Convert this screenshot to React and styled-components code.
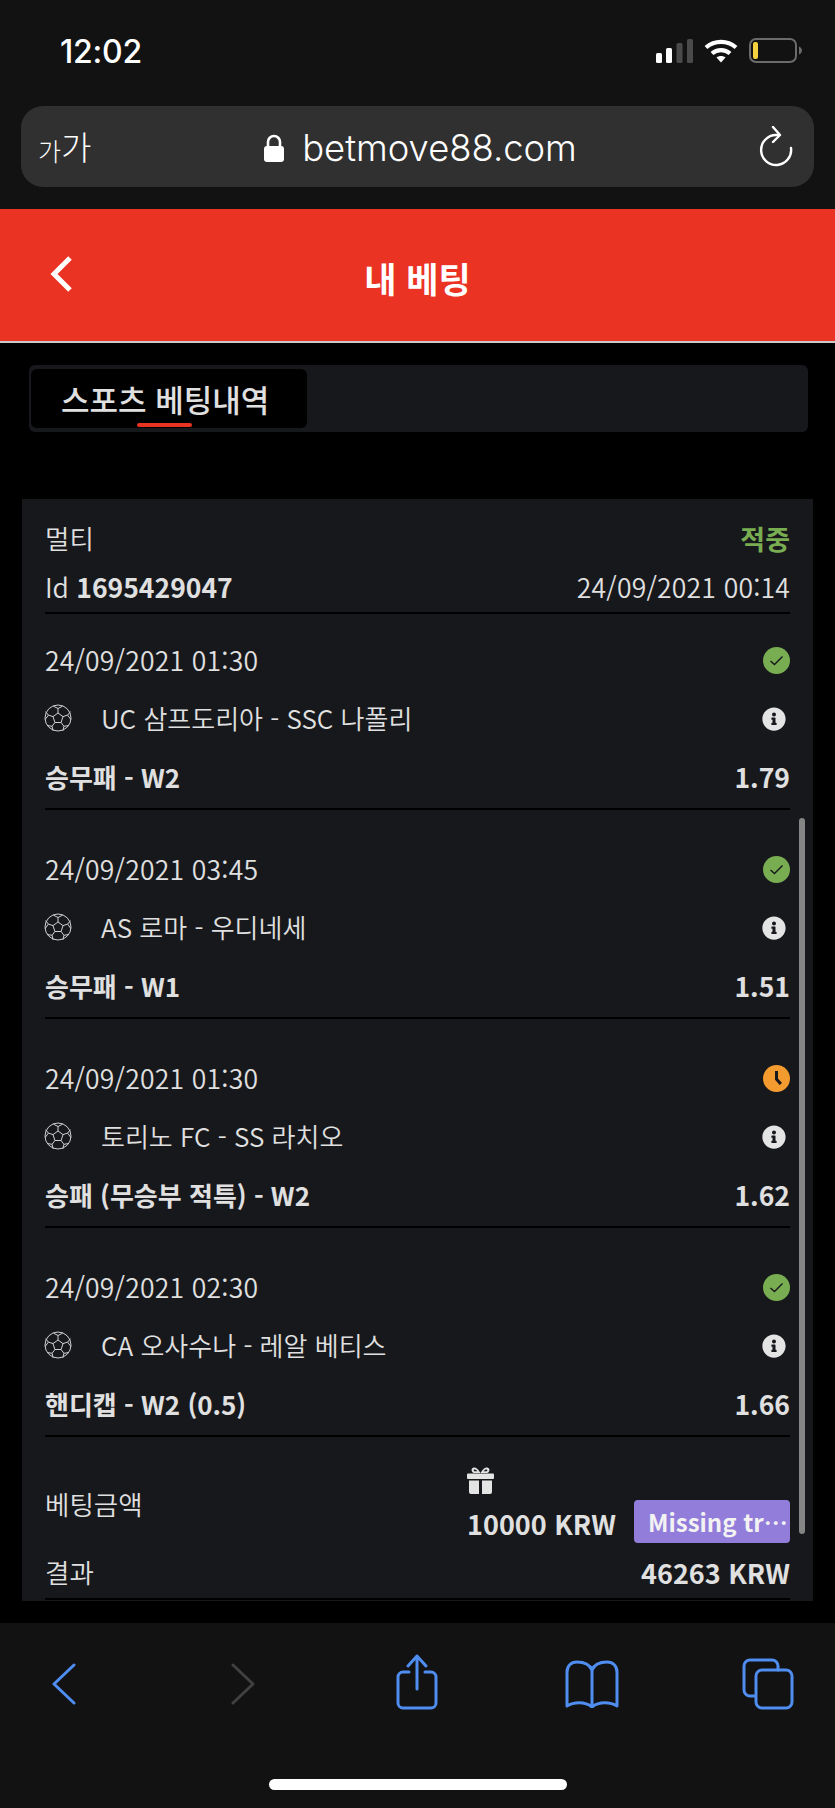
import React from 'react'
import styled, {createGlobalStyle} from 'styled-components'
import {FaInfoCircle} from 'react-icons/fa'

const GlobalStyle = createGlobalStyle`
  html, body {
    margin: 0;
    padding: 0;
    background: #000;
  }
  * {
    box-sizing: border-box;
  }
`

const Page = styled.div`
  width: 835px;
  height: 1808px;
  display: flex;
  flex-direction: column;
  overflow: hidden;
  font-family: "Noto Sans CJK KR", "Noto Sans", sans-serif;
  color: #e0e0e0;
`

const TopChrome = styled.div`
  height: 209px;
  flex: none;
  background: #121212;
  padding: 0 21px 0 21px;
`

const StatusBar = styled.div`
  height: 106px;
  display: flex;
  justify-content: space-between;
  padding: 36px 11px 0 39px;
  align-items: flex-start;
`

const Time = styled.div`
  font-family: Inter, "Liberation Sans", sans-serif;
  font-size: 32px;
  font-weight: 500;
  line-height: 32px;
  letter-spacing: -0.2px;
  color: #fff;
`

const StatusIcons = styled.div`
  display: flex;
  align-items: center;
  gap: 11px;
  margin-top: 2px;
`

const AddressBar = styled.div`
  height: 81px;
  border-radius: 22px;
  background: #303030;
  display: grid;
  grid-template-columns: 1fr auto 1fr;
  align-items: center;
  padding: 0 21px 0 17px;
  color: #fff;
`

const TextSize = styled.div`
  display: flex;
  align-items: flex-end;
  font-weight: 300;
  line-height: 1;
`

const TextSizeGlyph = styled.span`
  font-size: ${props => props.size}px;
`

const Url = styled.div`
  display: flex;
  align-items: center;
  gap: 18px;
  font-family: Inter, "Liberation Sans", sans-serif;
  font-size: 36.400px;
  font-weight: 300;
  margin-left: 10px;
  padding-top: 2px;
`

const Reload = styled.div`
  display: flex;
  justify-content: flex-end;
`

const Header = styled.header`
  height: 134px;
  flex: none;
  background: #ea3323;
  border-bottom: 2px solid #c9c9c9;
  display: grid;
  grid-template-columns: 1fr auto 1fr;
  align-items: center;
  padding-top: 4px;
  color: #fff;
`

const BackButton = styled.div`
  display: flex;
  margin: -7px 0 0 50px;
`

const HeaderTitle = styled.h1`
  margin: 0;
  font-size: 35px;
  font-weight: 700;
  line-height: 1;
`

const Main = styled.main`
  flex: 1;
  background: #000;
  padding: 22px 22px 0;
`

const TabStrip = styled.div`
  height: 67px;
  margin: 0 5px 0 7px;
  background: #17181c;
  border-radius: 6px;
  padding: 4px 2px 4px;
  display: flex;
`

const Tab = styled.div`
  position: relative;
  width: 276px;
  background: #000;
  border-radius: 6px;
  display: flex;
  align-items: center;
  padding-left: 30px;
  padding-bottom: 1px;
  font-size: 31px;
  font-weight: 500;
  line-height: 1;
  color: #e0e0e0;
  &::after {
    content: "";
    position: absolute;
    left: 106px;
    bottom: 1px;
    width: 55px;
    height: 4px;
    border-radius: 2px;
    background: #ea3323;
  }
`

const Card = styled.section`
  position: relative;
  height: 1102px;
  margin-top: 67px;
  padding: 15px 23px 0;
  background: #17181c;
  overflow: hidden;
`

const ScrollThumb = styled.div`
  position: absolute;
  top: 319px;
  right: 8px;
  width: 6px;
  height: 716px;
  border-radius: 3px;
  background: #858585;
`

const Row = styled.div`
  display: flex;
  justify-content: space-between;
  align-items: center;
  height: ${props => props.height}px;
  padding-bottom: ${props => props.lift || 0}px;
  font-size: 26.500px;
  font-weight: ${props => (props.strong ? 700 : 350)};
  line-height: 1;
  white-space: nowrap;
`

const SlipHead = styled.div`
  border-bottom: 2px solid #000;
`

const Status = styled.span`
  color: #79ad52;
  font-size: 27px;
  font-weight: 700;
`

const SlipId = styled.b`
  font-weight: 700;
`

const DateText = styled.span`
  letter-spacing: 0.2px;
`

const Leg = styled.div`
  padding-top: 23px;
  border-bottom: 2px solid #000;
  & + & {
    margin-top: 13px;
  }
`

const MatchName = styled.div`
  display: flex;
  align-items: center;
  gap: 29px;
  font-size: 26px;
`

const MarketName = styled.span`
  font-size: 26px;
`

const BallIcon = styled.svg`
  width: 28px;
  height: 28px;
  margin-left: -1px;
  flex: none;
`

const InfoIcon = styled(FaInfoCircle)`
  font-size: 24px;
  color: #e4e4e4;
  margin: 2px 4px 0 0;
`

const StakeRow = styled.div`
  display: flex;
  justify-content: space-between;
  align-items: center;
  height: 100px;
  margin-top: 16px;
  font-size: 26.500px;
  font-weight: 350;
`

const StakeValues = styled.div`
  display: flex;
  align-self: flex-end;
  align-items: flex-end;
  gap: 18px;
  padding-bottom: 10px;
`

const StakeAmount = styled.div`
  display: flex;
  flex-direction: column;
  gap: 16px;
  font-size: 27px;
  font-weight: 700;
  line-height: 1;
  padding-bottom: 6px;
`

const Badge = styled.div`
  width: 156px;
  height: 43px;
  padding-left: 14px;
  border-radius: 4px;
  background: #937ddb;
  color: #f2f2f2;
  font-size: 24px;
  font-weight: 700;
  line-height: 43px;
  white-space: nowrap;
`

const ResultRow = styled(Row)`
  border-bottom: 2px solid #000;
`

const ResultAmount = styled.span`
  font-size: 27px;
  font-weight: 700;
`

const BottomChrome = styled.div`
  height: 185px;
  flex: none;
  background: #121212;
  display: flex;
  flex-direction: column;
`

const Toolbar = styled.div`
  height: 156px;
  display: flex;
  align-items: flex-start;
  justify-content: space-between;
  padding: 31px 35px 0 33px;
`

const ToolSlot = styled.div`
  width: 64px;
  display: flex;
  justify-content: center;
`

const ToolIcon = styled.svg`
  flex: none;
  fill: none;
  stroke: ${props => (props.disabled ? '#404040' : '#4f8ef0')};
  stroke-width: 3;
  stroke-linecap: round;
  stroke-linejoin: round;
  margin-top: ${props => props.top || 0}px;
  margin-left: ${props => props.nudge || 0}px;
`

const HomeIndicator = styled.div`
  align-self: center;
  width: 298px;
  height: 11px;
  border-radius: 6px;
  background: #fff;
`

const legs = [
  {date: '24/09/2021 01:30', match: 'UC 삼프도리아 - SSC 나폴리', market: '승무패 - W2', odds: '1.79', state: 'won'},
  {date: '24/09/2021 03:45', match: 'AS 로마 - 우디네세', market: '승무패 - W1', odds: '1.51', state: 'won'},
  {date: '24/09/2021 01:30', match: '토리노 FC - SS 라치오', market: '승패 (무승부 적특) - W2', odds: '1.62', state: 'pending'},
  {date: '24/09/2021 02:30', match: 'CA 오사수나 - 레알 베티스', market: '핸디캡 - W2 (0.5)', odds: '1.66', state: 'won'},
]

function SignalIcon() {
  return (
    <svg width="37" height="24" viewBox="0 0 37 24">
      <rect x="0" y="14" width="6" height="10" rx="1.5" fill="#fff" />
      <rect x="10" y="9" width="6" height="15" rx="1.5" fill="#fff" />
      <rect x="20.500" y="4" width="6" height="20" rx="1.5" fill="#4a4a4a" />
      <rect x="31" y="0" width="6" height="24" rx="1.5" fill="#4a4a4a" />
    </svg>
  )
}

function WifiIcon() {
  return (
    <svg width="34" height="24" viewBox="0 0 34 24" fill="none" stroke="#fff" strokeWidth="4.200">
      <path d="M2 8.500C10.500 1 23.500 1 32 8.500" />
      <path d="M8 14.500C13 10 21 10 26 14.500" />
      <path d="M17 23.500L12.500 18.500C15 16.500 19 16.500 21.500 18.500Z" fill="#fff" stroke="none" />
    </svg>
  )
}

function BatteryIcon() {
  return (
    <svg width="54" height="25" viewBox="0 0 54 25">
      <rect x="1" y="1" width="46" height="23" rx="6" fill="none" stroke="#6b6b6b" strokeWidth="2" />
      <rect x="4" y="4" width="5" height="17" rx="2" fill="#f5d23d" />
      <path d="M50 8.500C52 9.500 53 11 53 12.500C53 14 52 15.500 50 16.500Z" fill="#6b6b6b" />
    </svg>
  )
}

function LockIcon() {
  return (
    <svg width="20" height="28" viewBox="0 0 20 28">
      <path d="M4 13V8a6 6 0 0 1 12 0v5" fill="none" stroke="#fff" strokeWidth="2.600" />
      <rect x="0" y="12" width="20" height="16" rx="3" fill="#fff" />
    </svg>
  )
}

function ReloadIcon() {
  return (
    <svg width="34" height="42" viewBox="0 0 34 42" fill="none" stroke="#fff" strokeWidth="2.400" strokeLinecap="round" strokeLinejoin="round">
      <path d="M32 22A15 15 0 1 1 17 9h3" />
      <path d="M14 1l7 8-7 7" />
    </svg>
  )
}

function GiftIcon() {
  return (
    <svg width="27" height="27" viewBox="0 0 27 27" fill="#e4e4e4">
      <path d="M13.500 6C11 1.500 8.500 0 6.500 0.500 4.500 1 4 3 5 4.500 5.500 5.500 6.500 6 8 6zM8 4.300C7 4.300 6.500 3.600 6.800 2.900 7.300 2 9 2.500 10.500 4.300z" fillRule="evenodd" />
      <path d="M13.500 6C16 1.500 18.500 0 20.500 0.500 22.500 1 23 3 22 4.500 21.500 5.500 20.500 6 19 6zM19 4.300C20 4.300 20.500 3.600 20.200 2.900 19.700 2 18 2.500 16.500 4.300z" fillRule="evenodd" />
      <rect x="0" y="6.500" width="27" height="5.500" rx="1" />
      <path d="M2 13.500h10V27H4a2 2 0 0 1-2-2zM15 13.500h10V25a2 2 0 0 1-2 2h-8z" />
    </svg>
  )
}

function Ball() {
  return (
    <BallIcon viewBox="0 0 28 28" fill="none" stroke="#d0d0d0" strokeWidth="1">
      <circle cx="14" cy="14" r="13" />
      <path d="M14 9l5 3.600-1.900 5.900h-6.200L9 12.600z" />
      <path d="M14 9V4.500M19 12.600l4.600-1.500M17.100 18.500l2.800 3.800M10.900 18.500l-2.800 3.800M9 12.600l-4.600-1.500" />
      <path d="M9.500 2.200L14 4.500l4.500-2.300M23.600 11.100l2.800-3.500M23.600 11.100l3.300 4.500M19.900 22.300l5-.8M19.900 22.300l-1 4.400M8.100 22.300l1 4.400M8.100 22.300l-5-.8M4.400 11.100l-3.300 4.500M4.400 11.100L1.600 7.600" />
    </BallIcon>
  )
}

function StateIcon({state}) {
  if (state === 'pending') {
    return (
      <svg width="27" height="27" viewBox="0 0 27 27">
        <circle cx="13.500" cy="13.500" r="13.500" fill="#f49b2f" />
        <path d="M12 6h3v7.500l4 4.500-2.300 2-4.700-5.200z" fill="#17181c" />
      </svg>
    )
  }
  return (
    <svg width="27" height="27" viewBox="0 0 27 27">
      <circle cx="13.500" cy="13.500" r="13.500" fill="#79ad52" />
      <path d="M7.500 14l4 3.500 8-8" fill="none" stroke="#17181c" strokeWidth="1.400" />
    </svg>
  )
}

function BetLeg({date, match, market, odds, state}) {
  return (
    <Leg>
      <Row height={50} lift={3}>
        <DateText>{date}</DateText>
        <StateIcon state={state} />
      </Row>
      <Row height={62}>
        <MatchName>
          <Ball />
          <span>{match}</span>
        </MatchName>
        <InfoIcon />
      </Row>
      <Row height={59} lift={3} strong>
        <MarketName>{market}</MarketName>
        <span>{odds}</span>
      </Row>
    </Leg>
  )
}

export default function App() {
  return (
    <Page lang="ko">
      <GlobalStyle />
      <TopChrome>
        <StatusBar>
          <Time>12:02</Time>
          <StatusIcons>
            <SignalIcon />
            <WifiIcon />
            <BatteryIcon />
          </StatusIcons>
        </StatusBar>
        <AddressBar>
          <TextSize>
            <TextSizeGlyph size={25}>가</TextSizeGlyph>
            <TextSizeGlyph size={33}>가</TextSizeGlyph>
          </TextSize>
          <Url>
            <LockIcon />
            betmove88.com
          </Url>
          <Reload>
            <ReloadIcon />
          </Reload>
        </AddressBar>
      </TopChrome>

      <Header>
        <BackButton>
          <svg width="22" height="36" viewBox="0 0 22 36" fill="none" stroke="#fff" strokeWidth="5">
            <path d="M20 2L4 18l16 16" />
          </svg>
        </BackButton>
        <HeaderTitle>내 베팅</HeaderTitle>
      </Header>

      <Main>
        <TabStrip>
          <Tab>스포츠 베팅내역</Tab>
        </TabStrip>
        <Card>
          <ScrollThumb />
          <SlipHead>
            <Row height={49}>
              <span>멀티</span>
              <Status>적중</Status>
            </Row>
            <Row height={49}>
              <span>Id <SlipId>1695429047</SlipId></span>
              <DateText>24/09/2021 00:14</DateText>
            </Row>
          </SlipHead>
          {legs.map((leg, i) => (
            <BetLeg key={i} {...leg} />
          ))}
          <StakeRow>
            <span>베팅금액</span>
            <StakeValues>
              <StakeAmount>
                <GiftIcon />
                <span>10000 KRW</span>
              </StakeAmount>
              <Badge>Missing tr…</Badge>
            </StakeValues>
          </StakeRow>
          <ResultRow height={47} lift={6}>
            <span>결과</span>
            <ResultAmount>46263 KRW</ResultAmount>
          </ResultRow>
        </Card>
      </Main>

      <BottomChrome>
        <Toolbar>
          <ToolSlot>
            <ToolIcon width="24" height="44" viewBox="0 0 24 44" top={8} nudge={-2}>
              <path d="M22 3L2 22l20 19" />
            </ToolIcon>
          </ToolSlot>
          <ToolSlot>
            <ToolIcon width="24" height="44" viewBox="0 0 24 44" top={8} nudge={4} disabled>
              <path d="M2 3l20 19L2 41" />
            </ToolIcon>
          </ToolSlot>
          <ToolSlot>
            <ToolIcon width="42" height="56" viewBox="0 0 42 56">
              <path d="M13 18H7a5 5 0 0 0-5 5v26a5 5 0 0 0 5 5h28a5 5 0 0 0 5-5V23a5 5 0 0 0-5-5h-6" />
              <path d="M21 35V2M12 12l9-10 9 10" />
            </ToolIcon>
          </ToolSlot>
          <ToolSlot>
            <ToolIcon width="54" height="48" viewBox="0 0 54 48" top={6}>
              <path d="M27 10C24 3 18 2 12 2 6 2 2 6 2 12v34c6-4 18-5 25 1 7-6 19-5 25-1V12c0-6-4-10-10-10-6 0-12 1-15 8z" />
              <path d="M27 10v37" />
            </ToolIcon>
          </ToolSlot>
          <ToolSlot>
            <ToolIcon width="52" height="52" viewBox="0 0 52 52" top={4}>
              <path d="M13 38H8a6 6 0 0 1-6-6V8a6 6 0 0 1 6-6h22a6 6 0 0 1 6 6v4" />
              <rect x="14" y="12" width="36" height="38" rx="6" />
            </ToolIcon>
          </ToolSlot>
        </Toolbar>
        <HomeIndicator />
      </BottomChrome>
    </Page>
  )
}
